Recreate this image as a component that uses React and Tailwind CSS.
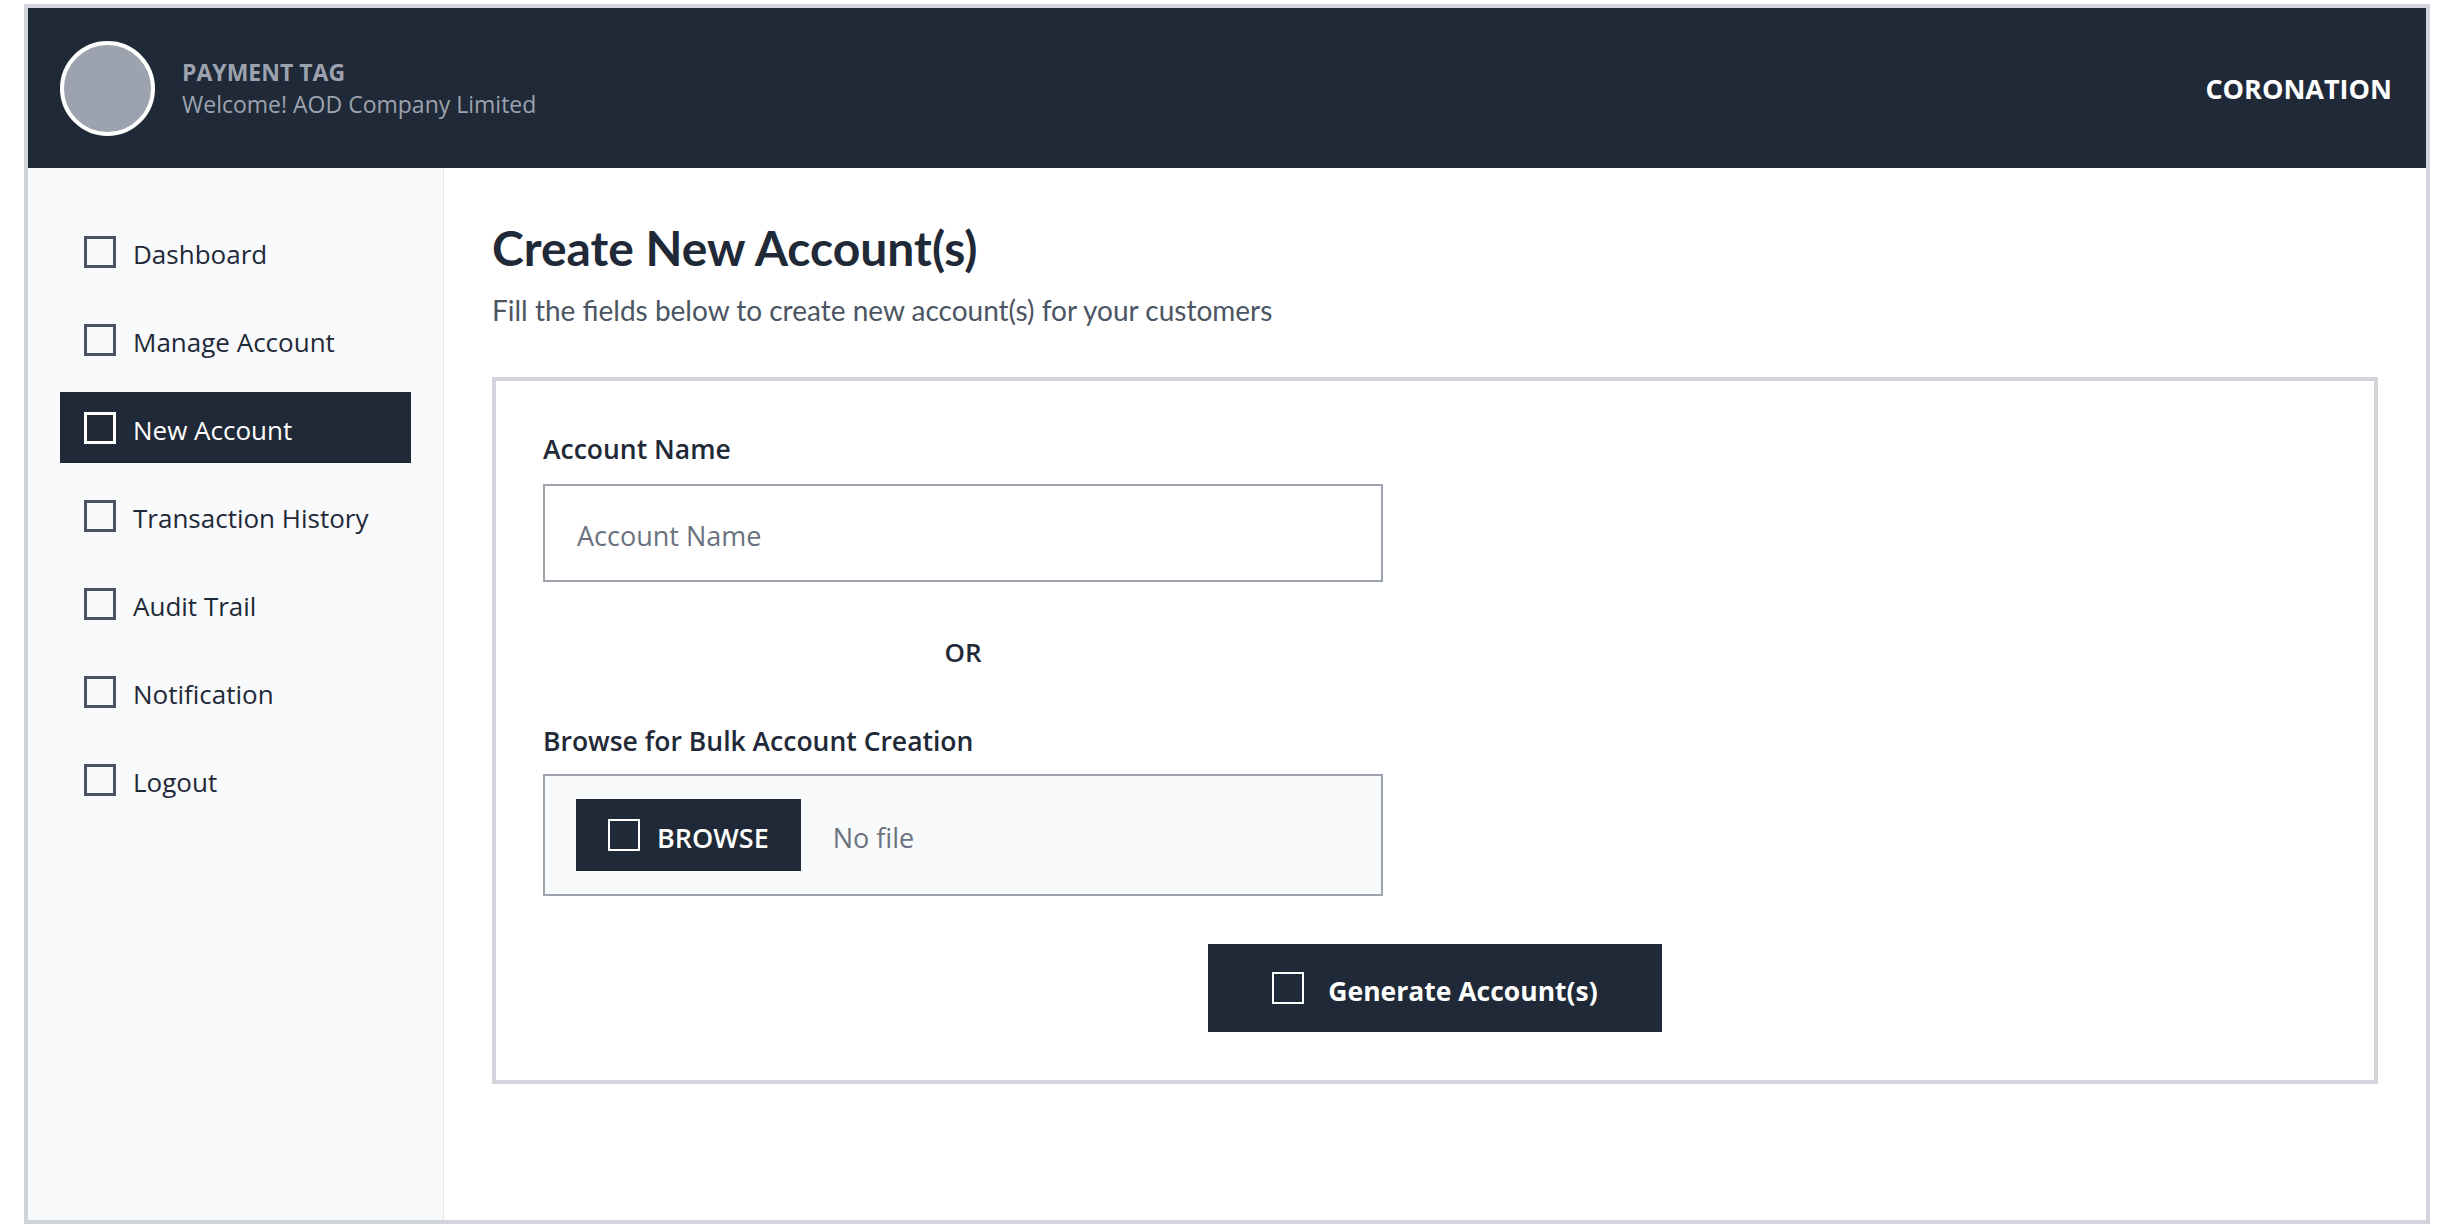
import React from "react";

const navItems = [
  "Dashboard",
  "Manage Account",
  "New Account",
  "Transaction History",
  "Audit Trail",
  "Notification",
  "Logout",
];

export default function App() {
  return (
    <div className="w-[2454px] h-[1224px] bg-white pt-[4px] px-[24px] overflow-hidden font-['Open_Sans',sans-serif]">
      <div className="h-[1220px] border-4 border-[#d1d5db] flex flex-col">
        <header className="h-[160px] shrink-0 bg-[#1f2937] flex items-center justify-between pl-8 pr-[34px]">
          <div className="flex items-center gap-[27px]">
            <div className="w-[95px] h-[95px] rounded-full bg-[#9ca3af] border-4 border-white" />
            <div className="text-[23px] leading-[32px] text-[#9ca3af]">
              <div className="font-bold">PAYMENT TAG</div>
              <div>Welcome! AOD Company Limited</div>
            </div>
          </div>
          <div className="pt-[3px] text-white font-bold text-[27px]">CORONATION</div>
        </header>
        <div className="flex flex-1 min-h-0">
          <aside className="w-[416px] shrink-0 bg-[#f9fafb] border-r border-[#e5e7eb] px-8 pt-12 flex flex-col gap-[17px]">
            {navItems.map((item) => {
              const active = item === "New Account";
              return (
                <div
                  key={item}
                  className={
                    active
                      ? "h-[71px] flex items-center pl-6 gap-[17px] bg-[#1f2937] text-white text-[26px]"
                      : "h-[71px] flex items-center pl-6 gap-[17px] text-[#1f2937] text-[26px]"
                  }
                >
                  <span
                    className={
                      active
                        ? "w-8 h-8 shrink-0 border-[3px] border-white"
                        : "w-8 h-8 shrink-0 border-[3px] border-[#4b5563]"
                    }
                  />
                  <span className="pt-[6px]">{item}</span>
                </div>
              );
            })}
          </aside>
          <main className="flex-1 px-12 pt-[51px]">
            <h1 className="font-['Lato',sans-serif] font-bold text-[48px] leading-[1.2] text-[#1f2937]">
              Create New Account(s)
            </h1>
            <p className="mt-[15px] font-['Lato',sans-serif] text-[28px] leading-[36px] text-[#4b5563]">
              Fill the fields below to create new account(s) for your customers
            </p>
            <div className="mt-[49px] border-4 border-[#d1d5db] pt-[50px] pb-12 px-[47px] flex flex-col">
              <label className="text-[26.5px] leading-[36px] font-semibold text-[#1f2937]">
                Account Name
              </label>
              <input
                type="text"
                placeholder="Account Name"
                className="mt-[17px] w-[840px] h-[98px] border-2 border-[#9ca3af] px-8 pt-[6px] text-[27px] text-[#1f2937] placeholder:text-[#6b7280] outline-none bg-white"
              />
              <div className="mt-[52px] w-[840px] text-center text-[26px] leading-[36px] font-semibold text-[#1f2937]">
                OR
              </div>
              <label className="mt-[53px] text-[26.5px] leading-[36px] font-semibold text-[#1f2937]">
                Browse for Bulk Account Creation
              </label>
              <div className="mt-[15px] w-[840px] h-[122px] border-2 border-[#9ca3af] bg-[#f9fafb] flex items-center pl-[31px] gap-8">
                <div className="h-[72px] px-8 flex items-center gap-[17px] bg-[#1f2937] text-white text-[27px] font-semibold">
                  <span className="w-8 h-8 border-2 border-white" />
                  <span className="pt-[8px]">BROWSE</span>
                </div>
                <span className="pt-[8px] text-[27px] text-[#6b7280]">No file</span>
              </div>
              <div className="mt-12 self-center h-[88px] px-16 flex items-center gap-6 bg-[#1f2937] text-white text-[26.5px] font-bold">
                <span className="w-8 h-8 border-2 border-white" />
                <span className="pt-[8px]">Generate Account(s)</span>
              </div>
            </div>
          </main>
        </div>
      </div>
    </div>
  );
}
